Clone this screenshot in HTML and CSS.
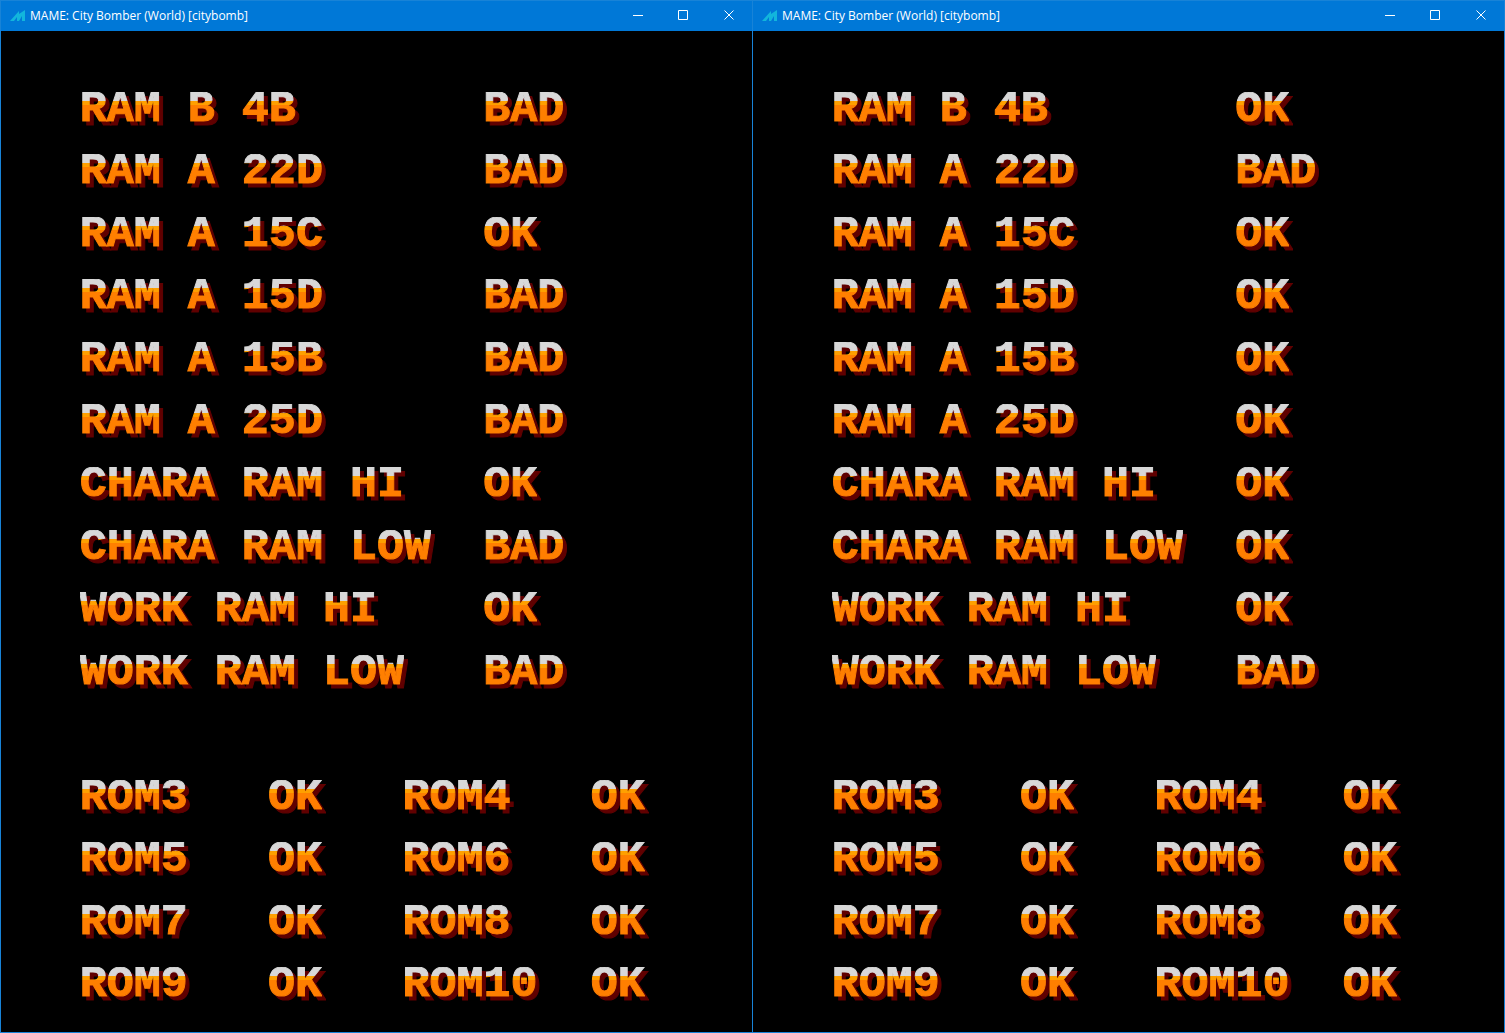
FILE: index.html
```html
<!DOCTYPE html>
<html lang="en">
<head>
  <meta charset="UTF-8">
  <meta name="viewport" content="width=device-width, initial-scale=1.0">
  <title>MAME: City Bomber (World) [citybomb]</title>
  <link rel="stylesheet" href="styles.css">
</head>
<body>
  <section class="window">
    <header class="titlebar">
      <svg class="logo" viewBox="0 0 16 12"><path d="M1 11 L10 1 L10 4 L16 0 V11 H13 V6 L10 11 H8 V7 L5 11 Z"/></svg>
      <h1>MAME: City Bomber (World) [citybomb]</h1>
      <button aria-label="Minimize"><svg viewBox="0 0 10 12"><path d="M1 5.5 H11"/></svg></button>
      <button aria-label="Maximize"><svg viewBox="0 0 10 12"><path d="M.5 .5 H9.5 V9.5 H.5 Z"/></svg></button>
      <button aria-label="Close"><svg viewBox="0 0 10 12"><path d="M.5 .5 L9.5 9.5 M9.5 .5 L.5 9.5"/></svg></button>
    </header>
    <main class="screen">
      <table class="ram">
        <tr><th><span>RAM B 4B</span></th><td><span>BAD</span></td></tr>
        <tr><th><span>RAM A 22D</span></th><td><span>BAD</span></td></tr>
        <tr><th><span>RAM A 15C</span></th><td><span>OK</span></td></tr>
        <tr><th><span>RAM A 15D</span></th><td><span>BAD</span></td></tr>
        <tr><th><span>RAM A 15B</span></th><td><span>BAD</span></td></tr>
        <tr><th><span>RAM A 25D</span></th><td><span>BAD</span></td></tr>
        <tr><th><span>CHARA RAM HI</span></th><td><span>OK</span></td></tr>
        <tr><th><span>CHARA RAM LOW</span></th><td><span>BAD</span></td></tr>
        <tr><th><span>WORK RAM HI</span></th><td><span>OK</span></td></tr>
        <tr><th><span>WORK RAM LOW</span></th><td><span>BAD</span></td></tr>
      </table>
      <table class="rom">
        <tr><th><span>ROM3</span></th><td><span>OK</span></td><th><span>ROM4</span></th><td><span>OK</span></td></tr>
        <tr><th><span>ROM5</span></th><td><span>OK</span></td><th><span>ROM6</span></th><td><span>OK</span></td></tr>
        <tr><th><span>ROM7</span></th><td><span>OK</span></td><th><span>ROM8</span></th><td><span>OK</span></td></tr>
        <tr><th><span>ROM9</span></th><td><span>OK</span></td><th><span>ROM10</span></th><td><span>OK</span></td></tr>
      </table>
    </main>
  </section>

  <section class="window">
    <header class="titlebar">
      <svg class="logo" viewBox="0 0 16 12"><path d="M1 11 L10 1 L10 4 L16 0 V11 H13 V6 L10 11 H8 V7 L5 11 Z"/></svg>
      <h1>MAME: City Bomber (World) [citybomb]</h1>
      <button aria-label="Minimize"><svg viewBox="0 0 10 12"><path d="M1 5.5 H11"/></svg></button>
      <button aria-label="Maximize"><svg viewBox="0 0 10 12"><path d="M.5 .5 H9.5 V9.5 H.5 Z"/></svg></button>
      <button aria-label="Close"><svg viewBox="0 0 10 12"><path d="M.5 .5 L9.5 9.5 M9.5 .5 L.5 9.5"/></svg></button>
    </header>
    <main class="screen">
      <table class="ram">
        <tr><th><span>RAM B 4B</span></th><td><span>OK</span></td></tr>
        <tr><th><span>RAM A 22D</span></th><td><span>BAD</span></td></tr>
        <tr><th><span>RAM A 15C</span></th><td><span>OK</span></td></tr>
        <tr><th><span>RAM A 15D</span></th><td><span>OK</span></td></tr>
        <tr><th><span>RAM A 15B</span></th><td><span>OK</span></td></tr>
        <tr><th><span>RAM A 25D</span></th><td><span>OK</span></td></tr>
        <tr><th><span>CHARA RAM HI</span></th><td><span>OK</span></td></tr>
        <tr><th><span>CHARA RAM LOW</span></th><td><span>OK</span></td></tr>
        <tr><th><span>WORK RAM HI</span></th><td><span>OK</span></td></tr>
        <tr><th><span>WORK RAM LOW</span></th><td><span>BAD</span></td></tr>
      </table>
      <table class="rom">
        <tr><th><span>ROM3</span></th><td><span>OK</span></td><th><span>ROM4</span></th><td><span>OK</span></td></tr>
        <tr><th><span>ROM5</span></th><td><span>OK</span></td><th><span>ROM6</span></th><td><span>OK</span></td></tr>
        <tr><th><span>ROM7</span></th><td><span>OK</span></td><th><span>ROM8</span></th><td><span>OK</span></td></tr>
        <tr><th><span>ROM9</span></th><td><span>OK</span></td><th><span>ROM10</span></th><td><span>OK</span></td></tr>
      </table>
    </main>
  </section>
</body>
</html>
```

FILE: styles.css
```css
* { box-sizing: border-box; }
body { margin: 0; min-height: 100vh; display: flex; background: #000; border-right: 1px solid #1883d7; }

.window {
  flex: 1; min-width: 0; display: flex; flex-direction: column;
  border: 1px solid #1883d7; border-right: none;
}

/* title bar */
.titlebar { display: flex; align-items: center; height: 30px; padding-left: 8px; background: #0078d7; }
.titlebar h1 {
  flex: 1; margin: 0 0 0 5px; color: #fff;
  font: 12px/16px "Open Sans", "Noto Sans", sans-serif; white-space: nowrap;
}
.titlebar button { width: 46px; height: 30px; padding: 0; border: none; background: none; }
.titlebar button svg { width: 10px; height: 12px; display: block; margin: 0 auto; fill: none; stroke: #fff; overflow: visible; }
.logo { width: 16px; height: 12px; fill: #12b5dc; }

/* 28 x 16 character screen, text starts at the 4th column */
.screen {
  flex: 1; display: grid; grid-template-rows: 1fr 10fr 1fr 4fr;
  padding-left: 10.5%; color: #ff7f00;
  font: bold 45px/36px "Liberation Mono", monospace;
}
.ram { grid-row: 2; }
.rom { grid-row: 4; }
table { width: 100%; height: 100%; table-layout: fixed; border-collapse: collapse; font: inherit; }
th, td { padding: 0; text-align: left; vertical-align: top; font: inherit; white-space: nowrap; }
.ram th { width: 60%; }
.rom th { width: 28%; }
.rom td { width: 20%; }
.rom td:last-child { width: 24%; }

th span, td span {
  display: inline-block; vertical-align: top; margin-top: -2px;
  background: linear-gradient(#d8d8d8 9px, #ffa000 9px, #ffa000 13px, #ff7f00 13px);
  -webkit-background-clip: text; background-clip: text; color: transparent;
  -webkit-text-stroke: 1px transparent;
  filter: drop-shadow(4px 4px 0 #600000);
}
```
